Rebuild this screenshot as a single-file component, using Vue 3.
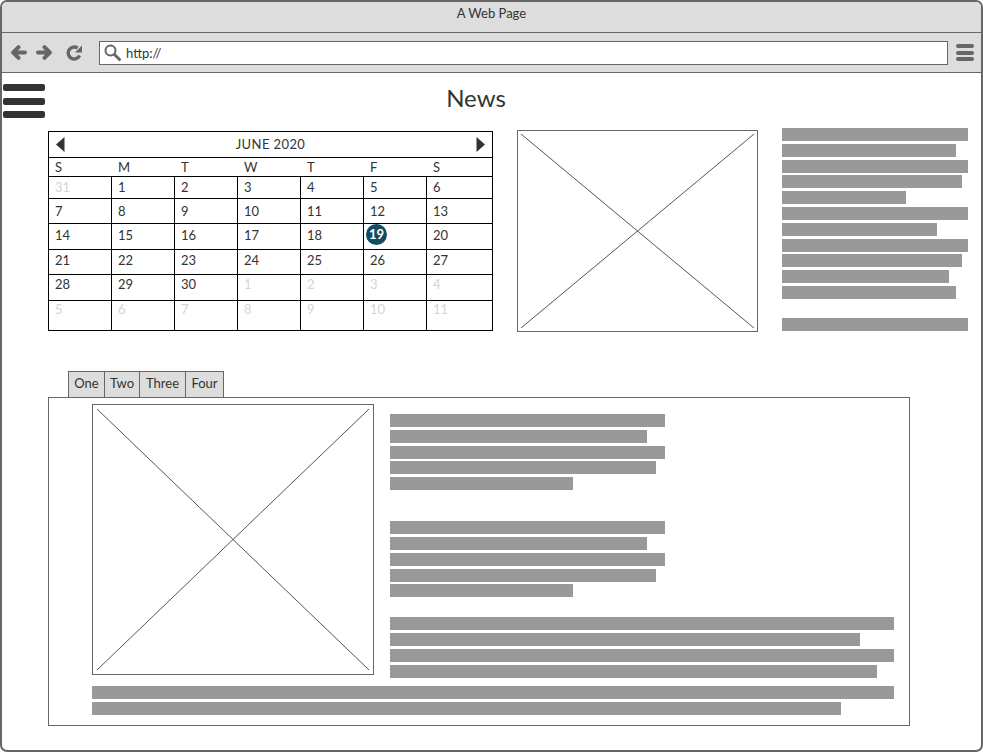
<script setup>
const weeks = [
  { cls: 'w1', days: [['31', true], ['1'], ['2'], ['3'], ['4'], ['5'], ['6']] },
  { cls: 'w2', days: [['7'], ['8'], ['9'], ['10'], ['11'], ['12'], ['13']] },
  { cls: 'w3', days: [['14'], ['15'], ['16'], ['17'], ['18'], ['19'], ['20']] },
  { cls: 'w4', days: [['21'], ['22'], ['23'], ['24'], ['25'], ['26'], ['27']] },
  { cls: 'w5', days: [['28'], ['29'], ['30'], ['1', true], ['2', true], ['3', true], ['4', true]] },
  { cls: 'w6', days: [['5', true], ['6', true], ['7', true], ['8', true], ['9', true], ['10', true], ['11', true]] }
]
const weekdays = ['S', 'M', 'T', 'W', 'T', 'F', 'S']
const tabs = ['One', 'Two', 'Three', 'Four']

const sideLines = [186, 174, 186, 180, 124, 186, 155, 186, 180, 167, 174]
const shortBlock = [275, 257, 275, 266, 183]
const wideBlock = [504, 470, 504, 487]
const footerBlock = [802, 749]
</script>

<template>
  <div class="window">
    <div class="titlebar">A Web Page</div>

    <div class="toolbar">
      <svg class="nav" width="16" height="15" viewBox="0 0 16 15">
        <path d="M7.5 2.2 L2.2 7.5 L7.5 12.8 M3 7.5 H14" fill="none" stroke="#666" stroke-width="4" stroke-linecap="round" stroke-linejoin="round" />
      </svg>
      <svg class="nav fwd" width="16" height="15" viewBox="0 0 16 15">
        <path d="M8.5 2.2 L13.8 7.5 L8.5 12.8 M13 7.5 H2" fill="none" stroke="#666" stroke-width="4" stroke-linecap="round" stroke-linejoin="round" />
      </svg>
      <svg class="nav reload" width="16" height="16" viewBox="0 0 16 16">
        <path d="M13.6 10.6 A6 6 0 1 1 11.6 3" fill="none" stroke="#666" stroke-width="3.4" />
        <path d="M9 7.4 L16 7.4 L16 0.6 Z" fill="#666" />
      </svg>
      <div class="address">
        <svg width="17" height="17" viewBox="0 0 17 17">
          <circle cx="6.5" cy="6.5" r="5" fill="none" stroke="#666" stroke-width="2" />
          <path d="M10.5 10.5 L15.5 15.5" stroke="#666" stroke-width="3" stroke-linecap="round" />
        </svg>
        <span>http://</span>
      </div>
      <div class="browser-menu">
        <i></i><i></i><i></i>
      </div>
    </div>

    <div class="page">
      <div class="head">
        <div class="burger"><i></i><i></i><i></i></div>
        <h1>News</h1>
      </div>

      <div class="top-row">
        <div class="calendar">
          <div class="cal-head">
            <svg width="9" height="15" viewBox="0 0 9 15"><path d="M8.5 0 V15 L0 7.5 Z" fill="#333" /></svg>
            <span class="month">JUNE 2020</span>
            <svg width="9" height="15" viewBox="0 0 9 15"><path d="M0.5 0 V15 L9 7.5 Z" fill="#333" /></svg>
          </div>
          <div class="weekdays">
            <span v-for="(d, i) in weekdays" :key="i">{{ d }}</span>
          </div>
          <div v-for="w in weeks" :key="w.cls" class="week" :class="w.cls">
            <div v-for="d in w.days" :key="d[0]" class="day" :class="{ muted: d[1] }">
              <span :class="{ today: d[0] === '19' }">{{ d[0] }}</span>
            </div>
          </div>
        </div>

        <div class="placeholder news-img">
          <svg viewBox="0 0 100 100" preserveAspectRatio="none">
            <path d="M0 0 L100 100 M100 0 L0 100" stroke="#555" stroke-width="1" vector-effect="non-scaling-stroke" />
          </svg>
        </div>

        <div class="side-text">
          <div class="lines">
            <div v-for="(w, i) in sideLines" :key="i" class="bar" :style="{ width: w + 'px' }"></div>
          </div>
          <div class="lines last-line">
            <div class="bar"></div>
          </div>
        </div>
      </div>

      <div class="tabs">
        <div v-for="t in tabs" :key="t" class="tab">{{ t }}</div>
      </div>

      <div class="panel">
        <div class="panel-main">
          <div class="placeholder panel-img">
            <svg viewBox="0 0 100 100" preserveAspectRatio="none">
              <path d="M0 0 L100 100 M100 0 L0 100" stroke="#555" stroke-width="1" vector-effect="non-scaling-stroke" />
            </svg>
          </div>
          <div class="panel-text">
            <div class="lines">
              <div v-for="(w, i) in shortBlock" :key="i" class="bar" :style="{ width: w + 'px' }"></div>
            </div>
            <div class="lines second">
              <div v-for="(w, i) in shortBlock" :key="i" class="bar" :style="{ width: w + 'px' }"></div>
            </div>
            <div class="lines third">
              <div v-for="(w, i) in wideBlock" :key="i" class="bar" :style="{ width: w + 'px' }"></div>
            </div>
          </div>
        </div>
        <div class="lines footer-lines">
          <div v-for="(w, i) in footerBlock" :key="i" class="bar" :style="{ width: w + 'px' }"></div>
        </div>
      </div>
    </div>
  </div>
</template>

<style scoped>
.window {
  box-sizing: border-box;
  width: 983px;
  height: 752px;
  border: 2px solid #666;
  border-radius: 7px;
  overflow: hidden;
  background: #fff;
  color: #333;
  font-family: Lato, "Liberation Sans", sans-serif;
  font-size: 13px;
}

.titlebar {
  box-sizing: border-box;
  height: 31px;
  padding-top: 3px;
  line-height: 16px;
  text-align: center;
  background: #ddd;
  border-bottom: 1px solid #666;
}

.toolbar {
  box-sizing: border-box;
  display: flex;
  align-items: center;
  height: 40px;
  padding-left: 9px;
  background: #ddd;
  border-bottom: 1px solid #666;
}

.nav {
  flex: none;
}

.fwd {
  margin-left: 9px;
}

.reload {
  margin-left: 14px;
}

.address {
  box-sizing: border-box;
  display: flex;
  align-items: center;
  gap: 5px;
  width: 849px;
  height: 24px;
  margin-left: 17px;
  padding-left: 4px;
  background: #fff;
  border: 1px solid #666;
}

.browser-menu {
  display: flex;
  flex-direction: column;
  gap: 2.5px;
  width: 18px;
  margin-left: 8px;
}

.browser-menu i {
  height: 4px;
  border-radius: 2px;
  background: #666;
}

.head {
  display: flex;
  height: 55px;
}

.burger {
  display: flex;
  flex-direction: column;
  gap: 6.5px;
  flex: none;
  width: 42px;
  margin: 11px 0 0 1px;
}

.burger i {
  height: 7px;
  border-radius: 2px;
  background: #333;
}

.head h1 {
  width: 862px;
  margin: 10px 0 0;
  font-size: 24px;
  font-weight: 400;
  line-height: 30px;
  text-align: center;
}

.top-row {
  display: flex;
  align-items: flex-start;
  height: 204px;
  padding-left: 46px;
}

.calendar {
  box-sizing: border-box;
  flex: none;
  width: 445px;
  height: 200px;
  margin-top: 3px;
  border: 1px solid #000;
}

.cal-head {
  box-sizing: border-box;
  display: flex;
  align-items: center;
  justify-content: space-between;
  height: 26px;
  padding: 0 7px;
  border-bottom: 1px solid #000;
  letter-spacing: 0.4px;
}

.month {
  margin-top: -2px;
}

.weekdays {
  box-sizing: border-box;
  display: grid;
  grid-template-columns: repeat(6, 63px) 65px;
  height: 19px;
  line-height: 19px;
  border-bottom: 1px solid #000;
}

.weekdays span {
  padding-left: 6px;
}

.week {
  box-sizing: border-box;
  display: grid;
  grid-template-columns: repeat(6, 63px) 65px;
  border-bottom: 1px solid #000;
}

.w1 { height: 22px; }
.w2 { height: 25px; }
.w3 { height: 26px; }
.w4 { height: 25px; }
.w5 { height: 26px; }
.w6 { height: 29px; border-bottom: 0; }

.day {
  box-sizing: border-box;
  padding-left: 6px;
  line-height: 20px;
  border-right: 1px solid #000;
}

.day:last-child {
  border-right: 0;
}

.w2 .day { padding-top: 2px; }
.w3 .day { padding-top: 1px; }
.w5 .day { line-height: 18px; }
.w6 .day { line-height: 16px; }

.muted {
  color: #d5d5d5;
}

.today {
  display: block;
  width: 21px;
  height: 21px;
  margin: -1px 0 0 -4px;
  border-radius: 50%;
  background: #124c60;
  color: #fff;
  font-weight: 700;
  line-height: 21px;
  text-align: center;
}

.placeholder {
  box-sizing: border-box;
  flex: none;
  border: 1px solid #666;
  padding: 3px;
}

.placeholder svg {
  display: block;
  width: 100%;
  height: 100%;
}

.news-img {
  width: 241px;
  height: 202px;
  margin: 2px 0 0 24px;
}

.side-text {
  flex: none;
  width: 186px;
  margin-left: 24px;
}

.lines {
  display: flex;
  flex-direction: column;
  gap: 2.8px;
}

.last-line {
  margin-top: 18.8px;
}

.bar {
  height: 13px;
  background: #999;
}

.tabs {
  display: grid;
  grid-template-columns: 37px 35px 46px 38px;
  width: 156px;
  height: 26px;
  margin: 39px 0 0 66px;
}

.tab {
  box-sizing: border-box;
  line-height: 23px;
  text-align: center;
  background: #ddd;
  border: 1px solid #666;
  border-bottom: 0;
  border-left: 0;
}

.tab:first-child {
  border-left: 1px solid #666;
}

.panel {
  box-sizing: border-box;
  width: 862px;
  height: 329px;
  margin-left: 46px;
  padding: 6px 0 0 43px;
  border: 1px solid #666;
}

.panel-main {
  display: flex;
  align-items: flex-start;
}

.panel-img {
  width: 282px;
  height: 271px;
  padding: 4px;
}

.panel-text {
  margin-left: 16px;
  padding-top: 10px;
}

.second {
  margin-top: 31px;
}

.third {
  margin-top: 20px;
}

.footer-lines {
  margin-top: 8px;
}
</style>
